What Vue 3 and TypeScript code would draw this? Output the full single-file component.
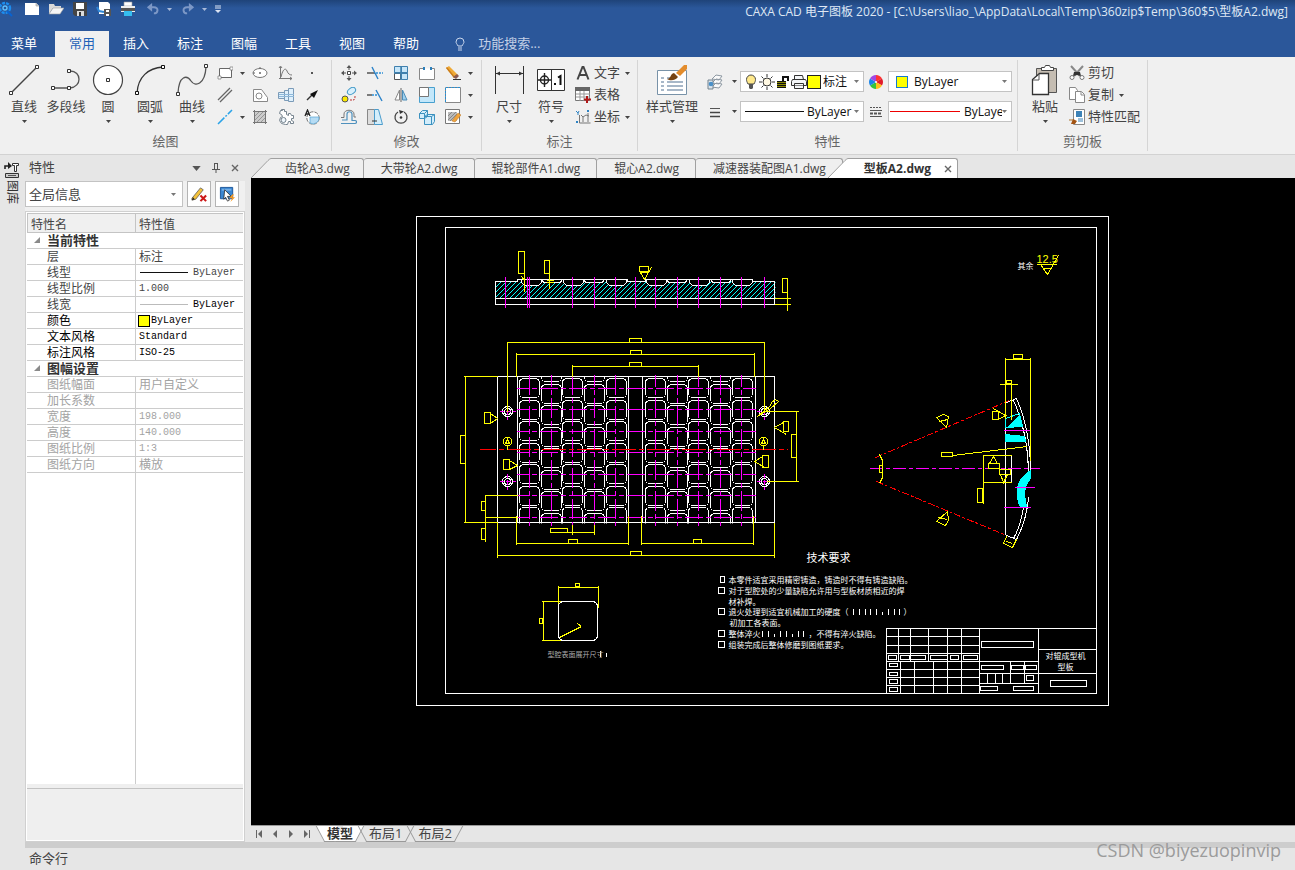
<script setup lang="ts">
import { ref } from 'vue'

interface Row { name: string; value: string; kind?: 'line' | 'thin' | 'color' | 'han'; tone: 'mid' | 'dark' | 'dim'; valueTone?: string }
interface Cell { x: number; y: number; w: number; h: number }
type Box = [number, number, number, number]

const menus = ['常用', '插入', '标注', '图幅', '工具', '视图', '帮助']
const activeMenu = ref('常用')
const search = ref('')

const quickIcons = [
  { id: 'q-new', label: '新建' }, { id: 'q-open', label: '打开' }, { id: 'q-save', label: '保存' },
  { id: 'q-export', label: '另存为' }, { id: 'q-print', label: '打印' },
]

const drawTools = [
  { id: 'b-line', label: '直线', menu: true }, { id: 'b-poly', label: '多段线', menu: false },
  { id: 'b-circle', label: '圆', menu: true }, { id: 'b-arc', label: '圆弧', menu: true },
  { id: 'b-curve', label: '曲线', menu: true },
]
const drawGrid = [
  ['s-rect', '*', 's-ellipse', 's-axis', 's-dot'],
  ['s-parallel', '', 's-contour', 's-shaft', 's-arrow'],
  ['s-center', '*', 's-hatch', 's-gear', 's-view'],
]
const editGrid = [
  ['e-move', 'e-trim', 'e-array', 'e-break', 'e-erase', '*'],
  ['e-copy', 'e-extend', 'e-mirror', 'e-scale', 'e-select', '*'],
  ['e-offset', 'e-stretch', 'e-rotate', 'e-explode', 'e-hatch', '*'],
]
const noteTools = [
  { id: 'n-text', label: '文字', menu: true }, { id: 'n-table', label: '表格', menu: false }, { id: 'n-coord', label: '坐标', menu: true },
]
const clipTools = [
  { id: 'c-cut', label: '剪切', menu: false }, { id: 'c-copy', label: '复制', menu: true }, { id: 'c-match', label: '特性匹配', menu: false },
]

const groups: { title: string; rows: Row[] }[] = [
  {
    title: '当前特性',
    rows: [
      { name: '层', value: '标注', kind: 'han', tone: 'mid' },
      { name: '线型', value: 'ByLayer', kind: 'line', tone: 'mid' },
      { name: '线型比例', value: '1.000', tone: 'mid' },
      { name: '线宽', value: 'ByLayer', kind: 'thin', tone: 'mid', valueTone: 'dark' },
      { name: '颜色', value: 'ByLayer', kind: 'color', tone: 'dark' },
      { name: '文本风格', value: 'Standard', tone: 'dark' },
      { name: '标注风格', value: 'ISO-25', tone: 'dark' },
    ],
  },
  {
    title: '图幅设置',
    rows: [
      { name: '图纸幅面', value: '用户自定义', kind: 'han', tone: 'dim' },
      { name: '加长系数', value: '', tone: 'dim' },
      { name: '宽度', value: '198.000', tone: 'dim' },
      { name: '高度', value: '140.000', tone: 'dim' },
      { name: '图纸比例', value: '1:3', tone: 'dim' },
      { name: '图纸方向', value: '横放', kind: 'han', tone: 'dim' },
    ],
  },
]

const docs = ['齿轮A3.dwg', '大带轮A2.dwg', '辊轮部件A1.dwg', '辊心A2.dwg', '减速器装配图A1.dwg', '型板A2.dwg']
const activeDoc = ref('型板A2.dwg')
const layouts = ['模型', '布局1', '布局2']
const activeLayout = ref('模型')

// Plate cavities: odd columns start at the upper edge, even ones are shifted by half a pitch.
const cellColumns = [519, 541, 562, 584, 606, 645, 667, 688, 710, 732]
const cavities: Cell[] = []
cellColumns.forEach((x, i) => {
  const shifted = i % 5 === 1 || i % 5 === 3
  for (let k = 0; k < 8; k++) {
    const y = Math.round((shifted ? 362 : 378) + k * 21.5 + (shifted ? 0.4 : 0))
    if (y < 520) cavities.push({ x, y, w: 20, h: 19 })
  }
})
const centreX = [529, 551, 572, 594, 615, 655, 677, 698, 720, 741]
const centreY = [388, 409, 431, 452, 474, 495, 517]
const sectionX = [505, 527, 529, 572, 594, 615, 635, 655, 677, 698, 720, 741, 764]
const deepSockets = [521, 563, 606, 646, 689, 732]
const shallowSockets = [542, 584, 667, 711]
const bolts = [[507, 411], [507, 481], [764, 411], [764, 481]]
const steelHatch = Array.from({ length: 60 }, (_, i) => `M${479 + i * 5} 298l18-18`).join('')
const denseHatch = Array.from({ length: 48 }, (_, i) => `M${925 + i * 3} 510l100-100`).join('')

const dimBoxes: Box[] = [
  [518, 251, 6, 22], [544, 260, 5, 13], [639, 266, 9, 5], [782, 278, 5, 14],
  [629, 338, 12, 4], [630, 350, 11, 4], [629, 362, 12, 4],
  [460, 435, 5, 28], [481, 501, 4, 9], [481, 528, 4, 11],
  [630, 551, 11, 4], [568, 539, 9, 4], [693, 539, 8, 4], [550, 528, 17, 4],
  [791, 434, 5, 23], [484, 412, 6, 11], [503, 459, 6, 10], [783, 421, 5, 10], [762, 455, 6, 12],
  [1013, 354, 9, 4], [1006, 380, 5, 3], [992, 411, 6, 8], [977, 488, 5, 14],
  [988, 463, 11, 5], [999, 469, 11, 5], [879, 465, 3, 7],
  [575, 583, 4, 3], [539, 618, 3, 5],
]
const blockBoxes: Box[] = [
  [888, 655, 8, 4], [900, 655, 9, 4], [909, 655, 16, 4], [930, 655, 17, 4], [950, 655, 8, 4], [963, 655, 14, 4],
  [889, 663, 8, 3], [889, 672, 8, 3], [889, 679, 8, 4], [889, 687, 8, 4],
  [981, 641, 52, 6], [981, 665, 22, 4], [1011, 665, 12, 4], [1025, 665, 11, 4], [1026, 675, 7, 5],
  [980, 686, 17, 4], [1013, 686, 20, 4], [1050, 680, 36, 6],
]
const notes = [
  { y: 582, x: 728, mark: 720, text: '本零件适宜采用精密铸造，铸造时不得有铸造缺陷。' },
  { y: 593, x: 728, mark: 718, text: '对于型腔处的少量缺陷允许用与型板材质相近的焊' },
  { y: 604, x: 728, mark: 0, text: '材补焊。' },
  { y: 614, x: 728, mark: 718, text: '退火处理到适宜机械加工的硬度（' },
  { y: 625, x: 729, mark: 0, text: '初加工各表面。' },
  { y: 636, x: 728, mark: 718, text: '整体淬火' },
  { y: 647, x: 728, mark: 718, text: '组装完成后整体修磨到图纸要求。' },
]
</script>

<template>
  <div class="app">
    <svg class="sprite" aria-hidden="true">
      <defs>
        <symbol id="caret" viewBox="0 0 5 3"><path d="M0 0h5L2.5 3z" fill="currentColor" /></symbol>
        <symbol id="q-logo" viewBox="0 0 16 16"><circle cx="5" cy="7" r="5" fill="none" stroke="#1c8df0" stroke-width="2.4" stroke-dasharray="3 1" /><circle cx="5" cy="7" r="2" fill="none" stroke="#5cc0ff" stroke-width="1.4" /><path d="M7 10l5 5" stroke="#0a63d0" stroke-width="2" /></symbol>
        <symbol id="q-new" viewBox="0 0 16 16"><path d="M1 2h11l3 3v9H1z" fill="#fff" /><path d="M12 2v3h3" fill="#ccc" stroke="#a8a8a8" stroke-width=".7" /></symbol>
        <symbol id="q-open" viewBox="0 0 16 16"><path d="M1 3h5l1 2h6v2H5l-4 6z" fill="#d9d9d9" /><path d="M5 7h11l-4 6H1z" fill="#f5f5f5" stroke="#a0a0a0" stroke-width=".6" /></symbol>
        <symbol id="q-save" viewBox="0 0 16 16"><path d="M1 1h14v14H3l-2-2z" fill="#454545" /><path d="M4 2h8v6H4z" fill="#fff" /><path d="M5 10h7v5H5z" fill="#ddd" /><path d="M7 11h2v4H7z" fill="#333" /></symbol>
        <symbol id="q-export" viewBox="0 0 16 16"><path d="M3 1h9l2 2v10H3z" fill="#fff" /><path d="M1 6l2 4 5 1" fill="none" stroke="#2f86d6" stroke-width="2" /><path d="M8 8h7v7H8z" fill="#555" /><path d="M10 9h3v2h-3zM10 13h3v2h-3z" fill="#fff" /></symbol>
        <symbol id="q-print" viewBox="0 0 16 16"><path d="M4 1h8v4H4z" fill="#fff" stroke="#999" stroke-width=".6" /><path d="M1 5h14v6H1z" fill="#eee" /><path d="M1 7h14v3H1z" fill="#555" /><path d="M4 10h8v5H4z" fill="#35bdf0" /></symbol>
        <symbol id="q-undo" viewBox="0 0 16 16"><path d="M3 6h6c6 0 5 7 0 7" fill="none" stroke="#7d98c6" stroke-width="2.2" /><path d="M7 1L1 6l6 5z" fill="#7d98c6" /></symbol>
        <symbol id="q-redo" viewBox="0 0 16 16"><path d="M13 6H7c-6 0-5 7 0 7" fill="none" stroke="#7d98c6" stroke-width="2.2" /><path d="M9 1l6 5-6 5z" fill="#7d98c6" /></symbol>
        <symbol id="q-more" viewBox="0 0 7 8"><path d="M1 1h6M1 3h6" stroke="#dbe4f3" /><path d="M1 5h6L4 8z" fill="#dbe4f3" /></symbol>
        <symbol id="q-bulb" viewBox="0 0 12 14"><path d="M4 9C3 7 2 6 2 5a4 4 0 0 1 8 0c0 1-1 2-2 4z" fill="none" stroke="#c9d6ec" /><path d="M4 11h4M4 13h4" stroke="#c9d6ec" /></symbol>

        <symbol id="b-line" viewBox="0 0 32 32"><path d="M3 29L29 3" stroke="#444" stroke-width="1.5" /><path d="M1.500 27.500h3v3h-3zM27.500 1.500h3v3h-3z" fill="#fff" stroke="#333" /></symbol>
        <symbol id="b-poly" viewBox="0 0 32 32"><path d="M3 24h17c12-1 12-17 0-17" fill="none" stroke="#555" stroke-width="1.300" /><path d="M1.500 22.500h3v3h-3zM17.500 22.500h3v3h-3zM17.500 5.500h3v3h-3z" fill="#fff" stroke="#333" /></symbol>
        <symbol id="b-circle" viewBox="0 0 32 32"><circle cx="16" cy="16" r="14.500" fill="#fff" stroke="#444" stroke-width="1.200" /><path d="M14.500 14.500h3v3h-3z" fill="#fff" stroke="#333" /></symbol>
        <symbol id="b-arc" viewBox="0 0 32 32"><path d="M3 29C4 13 14 4 29 3" fill="none" stroke="#333" stroke-width="1.300" /><path d="M1.500 27.500h3v3h-3zM27.500 1.500h3v3h-3z" fill="#fff" stroke="#111" /></symbol>
        <symbol id="b-curve" viewBox="0 0 32 32"><path d="M2 29C3 11 11 11 15 17S29 21 30 3" fill="none" stroke="#555" stroke-width="1.300" /><path d="M.5 28.500h3v3h-3zM28.500.5h3v3h-3z" fill="#fff" stroke="#333" /></symbol>
        <symbol id="b-size" viewBox="0 0 32 32"><path d="M2.500 2v28M30.500 2v28M3 9.500h27" stroke="#333" /><path d="M3 9.500l4-2v4zM30 9.500l-4-2v4z" fill="#333" /></symbol>
        <symbol id="b-symbol" viewBox="0 0 32 32"><path d="M2.500 5.500h27v21h-27zM16.500 5v22" fill="#fff" stroke="#333" /><circle cx="9.500" cy="16" r="4" fill="none" stroke="#222" stroke-width="1.400" /><path d="M3 16h13M9.500 9v14" stroke="#222" stroke-width="1.400" /><path d="M19 19h2v2h-2z" fill="#111" /><path d="M23 13.500l2.500-1.500v9" fill="none" stroke="#111" stroke-width="2" /></symbol>
        <symbol id="b-style" viewBox="0 0 32 32"><path d="M1.500 6.500h29v24h-29z" fill="#fff" stroke="#7892a8" /><path d="M5 14h3M11 14h3M5 18h3M11 18h16M5 22h3M11 22h16M5 26h3M11 26h16" stroke="#8ba0b6" stroke-width="1.300" /><path d="M20 9l8-8h3v4l-7 7z" fill="#e38c2c" /><path d="M18 9l4 4c-3 4-8 4-11 2 4 0 3-5 7-6z" fill="#764312" /></symbol>
        <symbol id="b-paste" viewBox="0 0 32 32"><path d="M7.500 4.500h20v24h-20z" fill="#c5bdb2" stroke="#555" /><path d="M12.500 6.500v-3h3l1-2h4l1 2h3v3z" fill="#fff" stroke="#444" /><path d="M10.500 9.500h9v21h-16v-15z" fill="#fff" stroke="#333" stroke-width="1.300" /><path d="M10 10v6H4" fill="none" stroke="#555" /></symbol>

        <symbol id="s-rect" viewBox="0 0 16 16"><path d="M2.500 3.500h12v9h-12z" fill="#fff" stroke="#666" /><path d="M1 11h3v3H1zM13 2h3v3h-3z" fill="#fff" stroke="#777" stroke-width=".7" /></symbol>
        <symbol id="s-ellipse" viewBox="0 0 16 16"><ellipse cx="8" cy="8" rx="7" ry="4.500" fill="#fff" stroke="#777" /><path d="M7 8h2M8 7v2M7 3h2M1 8h2" stroke="#666" /></symbol>
        <symbol id="s-axis" viewBox="0 0 16 16"><path d="M2.500 2v12M1 13.500h13M3 12C5 3 8 3 9 6s3 4 5 4M1 3l1.500-2L4 3M12 12l2 1.500-2 1.500" fill="none" stroke="#777" /></symbol>
        <symbol id="s-dot" viewBox="0 0 16 16"><path d="M7 7h2v2H7z" fill="#555" /></symbol>
        <symbol id="s-parallel" viewBox="0 0 16 16"><path d="M1 13L13 1M3 15L15 3" stroke="#666" stroke-width="1.300" /></symbol>
        <symbol id="s-contour" viewBox="0 0 16 16"><path d="M1.500 14.500v-12h8l6 8v4z" fill="#fff" stroke="#888" /><circle cx="7" cy="9" r="3" fill="#fff" stroke="#888" /></symbol>
        <symbol id="s-shaft" viewBox="0 0 16 16"><path d="M.5 5.500h6v6h-6zM6.500 3.500h4v10h-4zM10.500 1.500h5v13h-5z" fill="#dff0fc" stroke="#7b9bb8" /><path d="M1 7.500h15M1 9.500h15" stroke="#8db8da" /></symbol>
        <symbol id="s-arrow" viewBox="0 0 16 16"><path d="M3 13l5-5" stroke="#333" stroke-width="1.400" /><path d="M14 3L6 7l4 4z" fill="#111" /></symbol>
        <symbol id="s-center" viewBox="0 0 16 16"><path d="M1 15L15 1" stroke="#2ba3e8" stroke-width="1.500" stroke-dasharray="9 1.500 2 1.500" /></symbol>
        <symbol id="s-hatch" viewBox="0 0 16 16"><path d="M3 3h10v10H3z" fill="#ccc" /><path d="M3 7l4-4M3 11l8-8M5 13l8-8M9 13l4-4" stroke="#888" stroke-width=".8" /><path d="M1 2.500h14M1 13.500h14M2.500 1v14M13.500 1v14" stroke="#777" /></symbol>
        <symbol id="s-gear" viewBox="0 0 16 16"><path d="M3.500.5h3v2h2v3l2 1v-2h2l1 2h2v3h-2v2l2 1v2h-3v-2h-2l-1 3h-2l-4-1-2-3 1-3 2-1-1-2-2-1 1-3h2z" fill="#fff" stroke="#75838e" /><circle cx="5.500" cy="11" r="2.500" fill="#eef6fc" stroke="#75838e" /></symbol>
        <symbol id="s-view" viewBox="0 0 16 16"><circle cx="9" cy="9" r="6.200" fill="#fff" stroke="#777" stroke-dasharray="4 1" /><path d="M6 8h9a6 6 0 0 1-9 6z" fill="#b6dcf4" stroke="#58a5d2" stroke-width=".7" /><path d="M1 7l2.500-6L6 7M2 5h3" fill="none" stroke="#222" stroke-width="1.300" /></symbol>

        <symbol id="e-move" viewBox="0 0 16 16"><path d="M8 2v3M8 11v3M2 8h3M11 8h3" stroke="#555" /><path d="M8 0L5.500 3h5zM8 16l-2.500-3h5zM0 8l3-2.500v5zM16 8l-3-2.500v5z" fill="#555" /><path d="M6.500 6.500h3v3h-3z" fill="#fff" stroke="#444" /></symbol>
        <symbol id="e-trim" viewBox="0 0 16 16"><path d="M0 8h8" stroke="#555" stroke-width="1.500" /><path d="M9 8h7" stroke="#2d8fd5" stroke-dasharray="2 1" stroke-width="1.300" /><path d="M5 2l6 12" stroke="#2a82c9" stroke-width="1.400" /></symbol>
        <symbol id="e-array" viewBox="0 0 16 16"><path d="M1.500 1.500h7v6h-7zM8.500 1.500h6v6h-6zM8.500 8.500h6v6h-6z" fill="#c7e6f9" stroke="#3f80ae" /><path d="M1.500 8.500h6v6h-6z" fill="#fff" stroke="#555" /><path d="M8 1v14M1 8h14" stroke="#3f80ae" stroke-width="1.500" /></symbol>
        <symbol id="e-break" viewBox="0 0 16 16"><path d="M5 3.500H.5v11h15v-11H12" fill="#fff" stroke="#888" /><path d="M4 2h2v3H4zM11 2h2v3h-2z" fill="#2c7fbb" /></symbol>
        <symbol id="e-erase" viewBox="0 0 16 16"><path d="M1 3l3-2 9 9-4 3z" fill="#efa936" /><path d="M1 3l8 10 1-1L2 2z" fill="#c97c1c" /><path d="M8 12l4-3 2 2-3 3z" fill="#8b5a50" /><path d="M8 14.500h8" stroke="#333" /></symbol>
        <symbol id="e-copy" viewBox="0 0 16 16"><circle cx="4" cy="12" r="3" fill="#fbe800" stroke="#555" /><ellipse cx="10.500" cy="4" rx="4.500" ry="3" transform="rotate(-35 10.500 4)" fill="#d7effc" stroke="#459bc8" /><path d="M9 13h3c2 0 2-2 2-4" fill="none" stroke="#b33" stroke-dasharray="2 1" /></symbol>
        <symbol id="e-extend" viewBox="0 0 16 16"><path d="M0 8h5" stroke="#555" stroke-width="1.500" /><path d="M5 8h6" stroke="#2d8fd5" stroke-width="1.400" stroke-dasharray="2 1" /><path d="M9 3l6 11" stroke="#2a82c9" stroke-width="1.400" /></symbol>
        <symbol id="e-mirror" viewBox="0 0 16 16"><path d="M6.500 3v10H2z" fill="#fff" stroke="#888" /><path d="M9.500 3v10H14z" fill="#9fd0ee" stroke="#4d8db7" /><path d="M8 1v14" stroke="#666" /></symbol>
        <symbol id="e-scale" viewBox="0 0 16 16"><path d="M.5.5h15v15H.5z" fill="#c3e7fa" stroke="#48a0cf" /><path d="M.5.500h9v9h-9z" fill="#fff" stroke="#777" /></symbol>
        <symbol id="e-select" viewBox="0 0 16 16"><path d="M.5.500h15v15H.5z" fill="#fff" stroke="#888" /><path d="M.5 15V.5H16" fill="none" stroke="#288dd0" stroke-dasharray="2 1" /></symbol>
        <symbol id="e-offset" viewBox="0 0 16 16"><path d="M0 14.500h14c2 0 2-3 0-3h-3V5c0-3-5-3-5 0v6H1" fill="none" stroke="#4f91bd" stroke-width="1.200" /><path d="M0 8.500h3V5c0-5 10-5 10 0v3h2" fill="none" stroke="#777" /></symbol>
        <symbol id="e-stretch" viewBox="0 0 16 16"><path d="M.5.500h7v15h-7z" fill="#ddd" stroke="#888" /><path d="M7.500.500h4l4 15h-8z" fill="#d4eefb" stroke="#4b9ccc" /><path d="M5 12h5" stroke="#333" /></symbol>
        <symbol id="e-rotate" viewBox="0 0 16 16"><path d="M5 3a6 6 0 1 0 6 0" fill="none" stroke="#444" stroke-width="1.300" /><path d="M6 1l5 1.500L7 5z" fill="#333" /><circle cx="8" cy="8.500" r="1.300" fill="#333" /></symbol>
        <symbol id="e-explode" viewBox="0 0 16 16"><path d="M.5 4.500l3-3h5v6l-3 2h-5zM.5 4.500h5v5M5.500 4.500l3-3M5.500 7.500l3-2h7v7l-2 3h-8zM5.500 7.500h7v8M12.500 7.500l3-2" fill="#d3edfb" stroke="#3b91bf" /></symbol>
        <symbol id="e-hatch" viewBox="0 0 16 16"><path d="M.5.500h14v14H.5z" fill="#fff" stroke="#777" /><path d="M3 3h9v9H3z" fill="#bbb" /><path d="M3 7l4-4M3 11l8-8M5 12l7-7" stroke="#888" /><path d="M7 12l6-8 3 2-6 7z" fill="#f0a43c" stroke="#bb7424" stroke-width=".5" /></symbol>

        <symbol id="n-text" viewBox="0 0 16 16"><path d="M2.500 14.500L7.500 2h1L13.500 14.500M4.500 10h7" fill="none" stroke="#444" stroke-width="2" /></symbol>
        <symbol id="n-table" viewBox="0 0 16 16"><path d="M.5.500h14v13H.5z" fill="#fff" stroke="#777" /><path d="M0 0h15v4H0z" fill="#666" /><path d="M1 7h14M1 10h14M5 4v10M9 4v10" stroke="#999" /><path d="M12 9v7M9 12.500h7" stroke="#b01818" stroke-width="2" /></symbol>
        <symbol id="n-coord" viewBox="0 0 16 16"><path d="M4.500 6v8h11M8 13V8l3-2 3 1M8 8L6 6M13 13V4" fill="none" stroke="#777" /><path d="M1 2l2 2 1-2M3 4v2M12 1l2 2M14 1l-2 2M1 12l2 2M3 12l-2 2" stroke="#2d82c3" fill="none" /></symbol>
        <symbol id="p-layers" viewBox="0 0 16 16"><path d="M5 5l4-4 6 1-3 4zM5 9l4-4 6 1-3 4zM5 13l4-4 6 1-3 4z" fill="#fafafa" stroke="#8d98a2" /><path d="M1 6h5v9H1z" fill="#dce5ec" stroke="#75838e" /><circle cx="4" cy="10" r="2.300" fill="#4a90c8" /></symbol>
        <symbol id="p-lines" viewBox="0 0 16 16"><path d="M3 4.500h10" stroke="#555" /><path d="M3 8.500h10M3 12.500h10" stroke="#444" stroke-width="1.500" /></symbol>
        <symbol id="p-types" viewBox="0 0 16 16"><path d="M2 3.500h12" stroke="#555" stroke-dasharray="2 1" /><path d="M2 6.500h12M2 12.500h12" stroke="#555" /><path d="M2 9.500h12" stroke="#555" stroke-width="2" stroke-dasharray="3 1" /></symbol>
        <symbol id="p-wheel" viewBox="0 0 16 16"><path d="M8 8L8 1A7 7 0 0 1 14 4.500z" fill="#f33" /><path d="M8 8l6-3.500A7 7 0 0 1 14 11.500z" fill="#e11b2b" /><path d="M8 8l6 3.500A7 7 0 0 1 8 15z" fill="#ffc01a" /><path d="M8 8v7A7 7 0 0 1 2 11.500z" fill="#35c43c" /><path d="M8 8l-6 3.500A7 7 0 0 1 2 4.500z" fill="#1b85e8" /><path d="M8 8L2 4.500A7 7 0 0 1 8 1z" fill="#a147e3" /><circle cx="8" cy="8" r="1" fill="#fff" /></symbol>
        <symbol id="p-bulb" viewBox="0 0 16 16"><path d="M5 10C4 8 3.500 7 3.500 5.500a4.500 4.500 0 0 1 9 0C12.500 7 12 8 11 10z" fill="#ffe98c" stroke="#444" /><path d="M6 10h4v4l-1 1H7l-1-1z" fill="#555" /></symbol>
        <symbol id="p-sun" viewBox="0 0 16 16"><circle cx="8" cy="8" r="4" fill="#fff8e2" stroke="#333" /><path d="M8 0v3M8 13v3M0 8h3M13 8h3M2.500 2.500l2 2M11.500 11.500l2 2M2.500 13.500l2-2M11.500 4.500l2-2" stroke="#333" /></symbol>
        <symbol id="p-lock" viewBox="0 0 16 16"><path d="M2 7h9v7H2z" fill="#8a8a00" /><path d="M2 7.500h9M2 9.500h9M2 11.500h9M2 13.500h9" stroke="#111" /><path d="M8 7V3h5v4" fill="none" stroke="#111" stroke-width="2" /></symbol>
        <symbol id="p-print" viewBox="0 0 16 16"><path d="M3.500 5.500V1.500h8l1 4M1.500 5.500h13l1 2v4h-15v-4zM3.500 9.500h9v5h-9z" fill="#f4f6f8" stroke="#333" /><path d="M4 11.500h8" stroke="#888" /></symbol>
        <symbol id="c-cut" viewBox="0 0 16 16"><path d="M2 1l9 10M14 1L5 11" stroke="#888" stroke-width="2" /><path d="M5 7h6l1 4-4-1-4 1z" fill="#333" /><circle cx="3" cy="12.500" r="2" fill="#fff" stroke="#777" /><circle cx="13" cy="12.500" r="2" fill="#fff" stroke="#777" /></symbol>
        <symbol id="c-copy" viewBox="0 0 16 16"><path d="M.5.500h6l2 3v9h-8z" fill="#fff" stroke="#888" /><path d="M6.500 4.500h6l3 3v8h-9z" fill="#fff" stroke="#888" /><path d="M12 5v3h3" fill="none" stroke="#888" /></symbol>
        <symbol id="c-match" viewBox="0 0 16 16"><path d="M4.500.5h11v15h-11z" fill="#fff" stroke="#888" /><path d="M7 2h6v6H7z" fill="#3d83b8" /><path d="M9 10h5M9 12h5" stroke="#3d83b8" /><path d="M0 10h4v2H0z" fill="#ccb18f" /><path d="M4 10l4 2-2 3H2z" fill="#a35413" /></symbol>
        <symbol id="t-edit" viewBox="0 0 18 18"><path d="M1 13L10 2l3 2L5 14l-4 1z" fill="#f3c13a" stroke="#555" stroke-width=".8" /><path d="M1 15l1-3 2 2z" fill="#222" /><path d="M10 10l6 6M16 10l-6 6" stroke="#cc1818" stroke-width="2.200" /></symbol>
        <symbol id="t-pick" viewBox="0 0 18 18"><path d="M1.500 1.500h13v12h-13z" fill="#3a87d2" stroke="#1d5699" /><path d="M3 3h10v2H3z" fill="#74aee6" /><path d="M6 4l7 7h-4l2 4-2 1-2-4-2 2z" fill="#fff" stroke="#222" stroke-width=".8" /><path d="M14 9l-3 4h3l-2 4 5-5h-3l2-3z" fill="#ff9b1b" /></symbol>
        <symbol id="t-pin" viewBox="0 0 10 10"><path d="M3.500 0v6M6.500 0v6M3 .5h4M1 6.500h8M5 7v3" stroke="#555" fill="none" /></symbol>
        <symbol id="t-close" viewBox="0 0 8 8"><path d="M1 1l6 6M7 1L1 7" stroke="#666" stroke-width="1.400" /></symbol>
        <symbol id="t-rail" viewBox="0 0 16 18"><path d="M1 8V5h4" fill="none" stroke="#222" stroke-width="1.600" /><path d="M4 1l4 4-4 3z" fill="#222" /><path d="M8.500 2.500h6v2h-2v6h-2v-6h-2z" fill="#fff" stroke="#333" /><path d="M1.500 12.500h13v4h-13z" fill="#ccc" stroke="#333" /><path d="M4 14.500h8" stroke="#555" /></symbol>
        <clipPath id="bar"><path d="M495 281h280v17H495z" /></clipPath>
        <clipPath id="plate"><path d="M517 376h238v147H517z" /></clipPath>
        <clipPath id="teeth"><path d="M1005 418l14-5 3 13-17 1zM1005 434l19 2 1 5h-20zM1030 470Q1010 483 1020 507l6-1Q1021 487 1030 478z" /></clipPath>
      </defs>
    </svg>

    <header class="titlebar">
      <div class="quick">
        <svg class="logo"><use href="#q-logo" /></svg>
        <button v-for="q in quickIcons" :key="q.id" type="button" :aria-label="q.label"><svg class="i16"><use :href="'#' + q.id" /></svg></button>
        <button type="button" class="hist" aria-label="撤销"><svg class="i14"><use href="#q-undo" /></svg><svg class="caret"><use href="#caret" /></svg></button>
        <button type="button" class="hist" aria-label="恢复"><svg class="i14"><use href="#q-redo" /></svg><svg class="caret"><use href="#caret" /></svg></button>
        <button type="button" class="more" aria-label="自定义"><svg><use href="#q-more" /></svg></button>
      </div>
      <h1>CAXA CAD 电子图板 2020 - [C:\Users\liao_\AppData\Local\Temp\360zip$Temp\360$5\型板A2.dwg]</h1>
    </header>

    <nav class="menus">
      <button type="button" class="file">菜单</button>
      <button v-for="m in menus" :key="m" type="button" :class="{ on: m === activeMenu }" @click="activeMenu = m">{{ m }}</button>
      <label class="find"><svg><use href="#q-bulb" /></svg><input v-model="search" type="text" placeholder="功能搜索..." aria-label="功能搜索" /></label>
    </nav>

    <div class="ribbon">
      <section class="group draw">
        <div class="tools">
          <button v-for="t in drawTools" :key="t.id" type="button" class="big">
            <svg class="i32"><use :href="'#' + t.id" /></svg><span>{{ t.label }}</span><svg v-if="t.menu" class="caret"><use href="#caret" /></svg>
          </button>
          <div class="grid grid-draw">
            <template v-for="(row, r) in drawGrid" :key="r">
              <template v-for="(id, c) in row" :key="c">
                <button v-if="id" type="button" :aria-label="id"><svg v-if="id === '*'" class="caret"><use href="#caret" /></svg><svg v-else class="i16"><use :href="'#' + id" /></svg></button>
                <span v-else></span>
              </template>
            </template>
          </div>
        </div>
        <h2>绘图</h2>
      </section>
      <section class="group edit">
        <div class="tools">
          <div class="grid grid-edit">
            <template v-for="(row, r) in editGrid" :key="r">
              <button v-for="(id, c) in row" :key="c" type="button" :aria-label="id">
                <svg v-if="id === '*'" class="caret"><use href="#caret" /></svg><svg v-else class="i16"><use :href="'#' + id" /></svg>
              </button>
            </template>
          </div>
        </div>
        <h2>修改</h2>
      </section>
      <section class="group note">
        <div class="tools">
          <button type="button" class="big"><svg class="i32"><use href="#b-size" /></svg><span>尺寸</span><svg class="caret"><use href="#caret" /></svg></button>
          <button type="button" class="big"><svg class="i32"><use href="#b-symbol" /></svg><span>符号</span><svg class="caret"><use href="#caret" /></svg></button>
          <div class="stack">
            <button v-for="t in noteTools" :key="t.id" type="button"><svg class="i16"><use :href="'#' + t.id" /></svg><span>{{ t.label }}</span><svg v-if="t.menu" class="caret"><use href="#caret" /></svg></button>
          </div>
        </div>
        <h2>标注</h2>
      </section>
      <section class="group props">
        <div class="tools">
          <button type="button" class="big wide"><svg class="i32"><use href="#b-style" /></svg><span>样式管理</span><svg class="caret"><use href="#caret" /></svg></button>
          <div class="combos">
            <button type="button" aria-label="图层"><svg class="i16"><use href="#p-layers" /></svg><svg class="caret"><use href="#caret" /></svg></button>
            <div class="combo layer">
              <svg v-for="n in ['p-bulb', 'p-sun', 'p-lock', 'p-print']" :key="n" class="i16"><use :href="'#' + n" /></svg>
              <i class="swatch big-swatch"></i>
              <select aria-label="当前图层"><option>标注</option></select><svg class="caret"><use href="#caret" /></svg>
            </div>
            <button type="button" class="mid" aria-label="颜色"><svg class="i16"><use href="#p-wheel" /></svg></button>
            <div class="combo"><i class="swatch blue"></i><select aria-label="当前颜色"><option>ByLayer</option></select><svg class="caret"><use href="#caret" /></svg></div>
            <button type="button" aria-label="线宽"><svg class="i16"><use href="#p-lines" /></svg><svg class="caret"><use href="#caret" /></svg></button>
            <div class="combo"><i class="stroke"></i><select aria-label="当前线宽"><option>ByLayer</option></select><svg class="caret"><use href="#caret" /></svg></div>
            <button type="button" class="mid" aria-label="线型"><svg class="i16"><use href="#p-types" /></svg></button>
            <div class="combo"><i class="stroke red"></i><select aria-label="当前线型"><option>ByLayer</option></select><svg class="caret"><use href="#caret" /></svg></div>
          </div>
        </div>
        <h2>特性</h2>
      </section>
      <section class="group clip">
        <div class="tools">
          <button type="button" class="big"><svg class="i32"><use href="#b-paste" /></svg><span>粘贴</span><svg class="caret"><use href="#caret" /></svg></button>
          <div class="stack">
            <button v-for="t in clipTools" :key="t.id" type="button"><svg class="i16"><use :href="'#' + t.id" /></svg><span>{{ t.label }}</span><svg v-if="t.menu" class="caret"><use href="#caret" /></svg></button>
          </div>
        </div>
        <h2>剪切板</h2>
      </section>
    </div>

    <div class="work">
      <aside class="rail"><button type="button"><svg><use href="#t-rail" /></svg><span>图库</span></button></aside>
      <div class="main">
        <div class="upper">
          <aside class="panel">
            <div class="panel-head">
              <h2>特性</h2>
              <button type="button" aria-label="菜单"><svg class="tri"><use href="#caret" /></svg></button>
              <button type="button" aria-label="固定"><svg class="pin"><use href="#t-pin" /></svg></button>
              <button type="button" aria-label="关闭"><svg class="x"><use href="#t-close" /></svg></button>
            </div>
            <div class="scope">
              <div class="combo"><select aria-label="对象"><option>全局信息</option></select><svg class="caret"><use href="#caret" /></svg></div>
              <button type="button" aria-label="取消选择"><svg><use href="#t-edit" /></svg></button>
              <button type="button" aria-label="快速选择"><svg><use href="#t-pick" /></svg></button>
            </div>
            <div class="sheet">
              <table>
                <thead><tr><th>特性名</th><th>特性值</th></tr></thead>
                <tbody v-for="g in groups" :key="g.title">
                  <tr class="section"><td colspan="2"><span><svg viewBox="0 0 6 6"><path d="M6 0v6H0z" fill="#8a8a8a" /></svg>{{ g.title }}</span></td></tr>
                  <tr v-for="r in g.rows" :key="r.name" :class="r.tone">
                    <td><span>{{ r.name }}</span></td>
                    <td :class="[r.kind, r.valueTone]"><span><i v-if="r.kind && r.kind !== 'han'"></i>{{ r.value }}</span></td>
                  </tr>
                </tbody>
              </table>
              <div class="rest"></div>
              <div class="hint"></div>
            </div>
          </aside>

          <main class="stage">
            <div class="docs">
              <div v-for="d in docs" :key="d" class="doc" :class="{ on: d === activeDoc }">
                <svg v-if="d === docs[0] || d === activeDoc" class="slant" viewBox="0 0 20 20"><path d="M0 20L17 2.500Q19 .5 20 .5V20z" /><path class="edge" d="M0 20L17 2.500Q19 .5 20 .5" /></svg>
                <button type="button" @click="activeDoc = d">{{ d }}</button>
                <button v-if="d === activeDoc" type="button" class="shut" aria-label="关闭"><svg><use href="#t-close" /></svg></button>
              </div>
            </div>
            <div class="canvas">
              <svg viewBox="250.5 177.5 1044 647" preserveAspectRatio="xMidYMid meet" shape-rendering="crispEdges" fill="none">
                <g stroke="#fff">
                  <path d="M416 216h692v489H416zM445 227h651v466H445z" />
                </g>

                <path :d="steelHatch" clip-path="url(#bar)" stroke="#0ff" />
                <path v-for="x in deepSockets" :key="'d' + x" :d="`M${x} 279v3l3 3h14l3 -3v-3`" fill="#000" stroke="#fff" />
                <path v-for="x in shallowSockets" :key="'s' + x" :d="`M${x} 279v2l2 1h15l2 -1v-2`" fill="#000" stroke="#fff" />
                <path d="M495 304V281h22v-2h110v2h18v-2h107v2h22v23zM495 298h279" stroke="#fff" />
                <path v-for="x in sectionX" :key="'m' + x" :d="`M${x} 276V307`" stroke="#f0f" />
                <path d="M524 251v40M521 276l3 4M549 260v28M546 280h7M546 282h7M640 272l4 7 4-7M639 272h9M648 272l3-5M787 277v33M774 298h16M774 304h16" stroke="#ff0" />

                <path d="M497 376h277v146H497zM517 376v146M628 376v146M642 376v146M755 376v146" stroke="#fff" />
                <g clip-path="url(#plate)" stroke="#fff">
                  <rect v-for="(c, i) in cavities" :key="i" :x="c.x" :y="c.y" :width="c.w" :height="c.h" rx="4" />
                </g>
                <g stroke="#f0f">
                  <path v-for="(x, i) in centreX" :key="x" :d="`M${x} 374V525`" stroke-dasharray="20 3 5 3" :stroke-dashoffset="i % 2 ? 8 : 0" />
                  <path v-for="y in centreY" :key="y" :d="`M516 ${y}H755`" stroke-dasharray="18 3 5 3" stroke-dashoffset="6" />
                </g>
                <path d="M479 449H787" stroke="#f00" stroke-dasharray="24 3 5 3" stroke-dashoffset="8" />
                <g v-for="(b, i) in bolts" :key="'b' + i">
                  <circle :cx="b[0]" :cy="b[1]" r="5" stroke="#fff" /><circle :cx="b[0]" :cy="b[1]" r="3" stroke="#fff" />
                  <path :d="`M${b[0] - 8} ${b[1]}h16M${b[0]} ${b[1] - 8}v16`" stroke="#f0f" stroke-dasharray="4 2 5 2" />
                </g>
                <path d="M507 341v70M764 341v70M507 342h257M516 352v24M754 352v24M516 354h238M572 364v12M698 364v12M572 366h126M463 376h34M465 376v146M463 522h34M484 495h33M484 517h33M485 495v46M497 522v35M774 522v35M497 555h277M516 515v29M628 515v29M516 543h112M641 515v29M753 515v29M641 543h112M572 524v10M594 524v10M549 532h45M766 411h32M766 481h32M796 411v70" stroke="#ff0" />
                <path d="M490 413l7 5-7 5M509 460l8 5-8 4M783 422l-9 5 12 7M762 456l-8 5 12 7M757 416l13-11 1-3 4-3 3 2-8 7zM505 437h4l2 2v4l-2 2h-4l-2-2v-4zM505 443l2-4 2 4zM507 445v4M761 437h4l2 2v4l-2 2h-4l-2-2v-4zM761 443l2-4 2 4zM763 445v4" stroke="#ff0" />

                <path d="M1005 418v116M1005 455h6v27h-6M1006 402l10-4Q1031 432 1030 477l-4 7M1013 400Q1028 433 1028 474M1028 497Q1026 520 1016 539M1023 507Q1020 526 1013 538M1006 535l10 4" stroke="#fff" />
                <path :d="denseHatch" clip-path="url(#teeth)" stroke="#0ff" stroke-width="2" />
                <path d="M1005 418l14-5 3 13-17 1zM1005 434l19 2 1 5h-20zM1030 470Q1010 483 1020 507l6-1Q1021 487 1030 478z" stroke="#0ff" />
                <path d="M875 457L1009 400M876 481L1006 535" stroke="#f00" stroke-dasharray="7 2 3 2" />
                <path d="M869 468h170" stroke="#f0f" stroke-dasharray="13 3 4 3" />
                <path d="M1003 430h27M1014 487h20M1003 507h27" stroke="#f0f" />
                <path d="M1005 357v61M1030 357v103M1005 359h25M999 384h18M1011 382v37M982 455h29M982 482h29M983 455v48M998 411l7 4-7 4M989 463l4-7 4 7M1000 474l3 8 4-8M952 455L1027 446M941 452h11v4h-11zM879 454l3 6v17l-3 6M936 417l7-3 5 2-2 11zM939 421l8-2M947 511l-11 10 9 4 3-5zM938 517l9 2M1006 536l-3 7 9 4 4-8M1006 541l6 2M993 408l5 3" stroke="#ff0" />

                <g stroke="#ff0">
                  <rect v-for="(b, i) in dimBoxes" :key="i" :x="b[0]" :y="b[1]" :width="b[2]" :height="b[3]" />
                  <path d="M558 585v22M598 585v22M558 587h40M541 601h20M541 640h20M543 601v39M559 637l22-11M577 623l4 3" />
                  <path d="M1036 264h20M1040 264l7 10 11-19M1042 268h9" />
                </g>
                <rect x="558" y="601" width="39" height="39" rx="5" stroke="#fff" />

                <g stroke="#fff">
                  <path d="M886 693v-65h210M886 636h93M886 645h93M886 653h93M886 661h152M886 669h93M886 677h93M886 685h93M898 628v33M910 628v33M928 628v33M947 628v65M961 628v65M979 628v65M900 661v32M914 661v32M933 661v32M979 673h117M979 683h59M1010 661v22M1024 661v22M987 673v10M995 673v10M1002 673v10M1038 628v65M1038 649h58" />
                  <rect v-for="(b, i) in blockBoxes" :key="i" :x="b[0]" :y="b[1]" :width="b[2]" :height="b[3]" />
                  <template v-for="n in notes" :key="n.y"><rect v-if="n.mark" :x="n.mark" :y="n.y - 6" :width="n.mark === 720 ? 4 : 6" height="6" /></template>
                  <path d="M853 608v6M859 608v6M865 608v6M870 608v6M876 608v6M882 611v3M888 608v6M894 608v6M899 608v6M762 630v6M768 630v6M774 633v3M780 630v6M786 630v6M792 633v3M798 630v6M803 630v6M600 650v6M606 652v4" />
                </g>
                <g class="cad">
                  <text x="806" y="561" class="head">技术要求</text>
                  <text v-for="n in notes" :key="n.y" :x="n.x" :y="n.y">{{ n.text }}</text>
                  <text x="903" y="614">）</text>
                  <text x="808" y="636">，不得有淬火缺陷。</text>
                  <text x="1045" y="658">对辊成型机</text>
                  <text x="1057" y="669">型板</text>
                  <text x="547" y="656" class="cap">型腔表面展开尺寸</text>
                  <text x="1017" y="268">其余</text>
                  <text x="1036" y="262" class="rough">12.5</text>
                </g>
              </svg>
            </div>
            <div class="layouts">
              <button type="button" aria-label="第一个"><svg viewBox="0 0 8 8"><path d="M1 0v8h1V0zM7 0v8L3 4z" /></svg></button>
              <button type="button" aria-label="上一个"><svg viewBox="0 0 8 8"><path d="M6 0v8L2 4z" /></svg></button>
              <button type="button" aria-label="下一个"><svg viewBox="0 0 8 8"><path d="M2 0v8l4-4z" /></svg></button>
              <button type="button" aria-label="最后一个"><svg viewBox="0 0 8 8"><path d="M1 0v8l4-4zM6 0v8h1V0z" /></svg></button>
              <div class="sheets">
                <button v-for="l in layouts" :key="l" type="button" class="tab" :class="{ on: l === activeLayout }" @click="activeLayout = l"><span>{{ l }}</span></button>
              </div>
            </div>
          </main>
        </div>
        <footer>命令行</footer>
      </div>
    </div>
    <div class="mark">CSDN @biyezuopinvip</div>
  </div>
</template>

<style>
body { margin: 0; }
</style>

<style scoped>
.app { position: relative; display: flex; flex-direction: column; min-height: 100vh; background: #e6e6e6; color: #444; font: 13px/18px "Open Sans", "Noto Sans CJK SC", sans-serif; }
.sprite { position: absolute; width: 0; height: 0; }
svg { display: block; flex: none; }
button, input, select { margin: 0; padding: 0; border: 0; background: none; color: inherit; font: inherit; }
h1, h2 { margin: 0; font-weight: 400; font-size: 13px; }
.i16 { width: 16px; height: 16px; }
.i14 { width: 14px; height: 14px; }
.i32 { width: 32px; height: 32px; }
.caret { width: 5px; height: 3px; }

.titlebar { display: flex; justify-content: space-between; height: 31px; padding: 0 7px 0 0; background: linear-gradient(#1f4379, #2b579a 8px); color: #dfe7f3; }
.quick { display: flex; height: 18px; align-items: center; }
.quick button { width: 24px; display: flex; justify-content: center; align-items: center; }
.quick .logo { width: 16px; height: 16px; margin-right: 4px; }
.quick .hist { width: 35px; gap: 7px; padding-left: 3px; color: #a9bad9; }
.quick .more { width: 14px; }
.more svg { width: 7px; height: 8px; }
.titlebar h1 { font-size: 12px; line-height: 24px; white-space: nowrap; }

.menus { display: flex; height: 26px; background: #2b579a; color: #fff; }
.menus button { padding: 0 14px 2px; }
.menus .file { padding: 0 18px 2px 11px; }
.menus .on { background: #f0f0f0; color: #1e62b8; }
.find { display: flex; align-items: center; gap: 12px; margin-left: 21px; }
.find svg { width: 12px; height: 14px; }
.find input { width: 120px; padding-bottom: 2px; outline: 0; }
.find input::placeholder { color: #c3d0e6; opacity: 1; }

.ribbon { display: flex; height: 98px; padding-top: 3px; box-sizing: border-box; background: #f0f0f0; border-bottom: 1px solid #d2d2d2; }
.group { display: flex; flex-direction: column; align-items: stretch; height: 91px; border-right: 1px solid #d5d5d5; box-sizing: border-box; }
.group h2 { text-align: center; line-height: 20px; margin-top: auto; color: #666; }
.tools { display: flex; padding-top: 4px; }
.draw .tools { padding-left: 3px; padding-right: 6px; }
.edit .tools { padding-left: 4px; padding-right: 6px; }
.note .tools { padding-left: 6px; padding-right: 4px; }
.props .tools { padding-left: 4px; padding-right: 5px; }
.clip .tools { padding-left: 6px; padding-right: 7px; }
.big { display: flex; flex-direction: column; align-items: center; width: 42px; height: 64px; white-space: nowrap; }
.big span { line-height: 18px; margin: 1px 0 5px; }
.wide { width: 60px; }
.grid { display: grid; grid-auto-rows: 22px; margin-top: -2px; }
.grid button { display: flex; align-items: center; justify-content: center; }
.grid-draw { grid-template-columns: 24px 10px 26px 26px 26px; }
.grid-edit { grid-template-columns: repeat(5, 26px) 9px; }
.stack { display: flex; flex-direction: column; margin-top: -2px; padding-left: 3px; }
.stack button { display: flex; align-items: center; gap: 3px; height: 22px; white-space: nowrap; }
.stack span { padding-bottom: 2px; }
.stack .caret { margin-left: 2px; }
.note .stack { width: 58px; }
.combos { display: grid; grid-template-columns: 38px 124px 24px 124px; grid-template-rows: 21px 21px; row-gap: 9px; padding-top: 7px; }
.combos button { display: flex; align-items: center; justify-content: flex-end; gap: 9px; padding-right: 3px; }
.combos .mid { justify-content: center; padding: 0; }
.combo { display: flex; align-items: center; padding: 0 4px; background: #fff; border: 1px solid #c3c3c3; box-sizing: border-box; color: #777; min-width: 0; }
.combo select { flex: 1; min-width: 0; appearance: none; color: #111; font-size: 12px; outline: 0; overflow: hidden; }
.combo.layer { padding-left: 2px; }
.swatch { flex: none; width: 12px; height: 12px; background: #ff0; border: 1px solid #222; box-sizing: border-box; }
.big-swatch { width: 14px; height: 14px; margin: 1px 2px 0 0; }
.blue { border-color: #1479d0; margin: 0 6px 0 3px; }
.stroke { width: 59px; height: 1px; flex: none; background: #111; margin-right: 3px; }
.stroke.red { width: 70px; margin: 0 4px 0 -3px; background: #e00; }

.work { flex: 1; display: flex; min-height: 0; }
.rail { width: 25px; flex: none; padding-top: 6px; box-sizing: border-box; }
.rail button { display: flex; flex-direction: column; align-items: center; gap: 1px; width: 24px; color: #333; }
.rail svg { width: 16px; height: 18px; }
.rail span { writing-mode: vertical-rl; text-orientation: sideways; font-size: 12px; line-height: 16px; }
.main { flex: 1; display: flex; flex-direction: column; min-width: 0; }
.upper { flex: 1; display: flex; border-bottom: 6px solid #cdcdcd; min-height: 0; }
footer { height: 22px; line-height: 20px; padding-left: 4px; }

.panel { display: flex; flex-direction: column; width: 220px; flex: none; margin-right: 6px; }
.panel-head { display: flex; align-items: center; height: 26px; padding: 0 1px 0 4px; }
.panel-head h2 { flex: 1; padding-bottom: 2px; }
.panel-head button { width: 19px; display: flex; justify-content: center; }
.tri { width: 9px; height: 5px; color: #555; }
.pin { width: 10px; height: 10px; }
.x { width: 8px; height: 8px; }
.scope { display: flex; gap: 4px; height: 30px; padding: 0 6px 4px 0; box-sizing: border-box; background: #f0f0f0; }
.scope .combo { flex: 1; padding: 0 6px 0 3px; }
.scope select { font-size: 13px; color: #444; }
.scope button { display: flex; align-items: center; justify-content: center; width: 24px; background: #fff; border: 1px solid #b4b4b4; box-sizing: border-box; }
.scope svg:not(.caret) { width: 17px; height: 17px; }
.sheet { flex: 1; display: flex; flex-direction: column; border: 1px solid #d0d0d0; background: #fff; padding: 1px; }
.sheet table { width: 100%; table-layout: fixed; border-collapse: separate; border-spacing: 0; font: 12px/15px "Noto Sans CJK SC", sans-serif; }
th { height: 18px; padding: 0 0 0 3px; background: #f0f0f0; border: solid #c4c4c4; border-width: 1px 0 1px 1px; text-align: left; font-weight: 400; }
td { height: 15px; padding: 0; border-bottom: 1px solid #ccc; white-space: nowrap; }
td:first-child { padding-left: 20px; }
td + td { border-left: 1px solid #ccc; padding-left: 3px; font-family: "Liberation Mono", monospace; font-size: 10px; }
td span { display: flex; align-items: center; height: 13px; padding-bottom: 2px; }
td + td span { height: 15px; padding: 0; }
td.han { font: 12px/15px "Noto Sans CJK SC", sans-serif; }
td.han span { height: 13px; padding-bottom: 2px; }
.section td { padding-left: 7px !important; font-weight: 700; font-size: 13px; color: #333; }
.section svg { width: 6px; height: 6px; margin-right: 7px; }
.dark td, td.dark { color: #000; }
.dim td { color: #a3a3a3; }
td i { flex: none; width: 48px; height: 1px; background: #111; margin: 0 5px 0 1px; }
td.thin i { background: #bbb; }
td.color { padding-left: 2px; }
td.color i { width: 10px; height: 10px; background: #ff0; border: 1px solid #000; margin: 0 1px 0 0; }
.rest { flex: 1; background: linear-gradient(90deg, transparent 50%, #ccc 50%, #ccc calc(50% + 1px), transparent calc(50% + 1px)); }
.hint { height: 51px; background: #efefef; border-top: 1px solid #c3c3c3; box-shadow: 0 -4px #efefef; }

.stage { flex: 1; display: flex; flex-direction: column; min-width: 0; }
.docs { display: flex; height: 20px; padding-top: 3px; }
.doc { position: relative; display: flex; align-items: center; height: 20px; padding: 0 16px 0 17px; background: #efefef; border: solid #a0a0a0; border-width: 1px 1px 0 0; border-radius: 3px 3px 0 0; box-sizing: border-box; font-size: 12px; color: #444; white-space: nowrap; }
.doc:first-child { margin-left: 20px; padding: 0 13px 0 14px; border-top-left-radius: 0; }
.doc.on { background: #fff; margin-left: 5px; padding: 0 5px 0 16px; border-top-left-radius: 0; font-weight: 700; color: #333; }
.slant { position: absolute; right: 100%; top: -1px; width: 20px; height: 20px; fill: #efefef; }
.on .slant { fill: #fff; }
.slant .edge { fill: none; stroke: #a0a0a0; }
.shut { margin-left: 13px; }
.shut svg { width: 8px; height: 8px; }
.canvas { flex: 1; background: #000; min-height: 0; display: flex; }
.canvas svg { width: 100%; height: 100%; }
.cad text { fill: #fff; stroke: none; font: 8px "Noto Sans CJK SC", sans-serif; }
.cad .head { font-size: 11px; }
.cad .cap { font-size: 7px; fill: #aaa; }
.cad .rough { font: 11px "Liberation Sans", sans-serif; fill: #ff0; }
.layouts { display: flex; align-items: flex-start; height: 17px; border-top: 1px solid #999; box-sizing: border-box; }
.layouts > button { width: 16px; height: 16px; display: flex; align-items: center; justify-content: center; }
.layouts > button svg { width: 8px; height: 8px; fill: #666; }
.sheets { display: flex; margin-left: 4px; }
.tab { position: relative; z-index: 0; height: 16px; line-height: 13px; padding: 0 8px 2px; }
.tab::before, .tab::after { content: ""; position: absolute; z-index: -1; top: 0; bottom: 0; border-bottom: 1px solid #999; box-sizing: border-box; }
.tab::before { left: 1px; width: 50%; border-left: 1px solid #999; transform: skewX(28deg); }
.tab::after { right: 1px; width: 50%; border-right: 1px solid #999; transform: skewX(-28deg); }
.tab.on { font-weight: 700; color: #333; }
.tab.on::before, .tab.on::after { background: #fff; }
.mark { position: absolute; right: 14px; bottom: 7px; color: #9b9b9b; font: 18px/26px "Open Sans", sans-serif; pointer-events: none; }
</style>
